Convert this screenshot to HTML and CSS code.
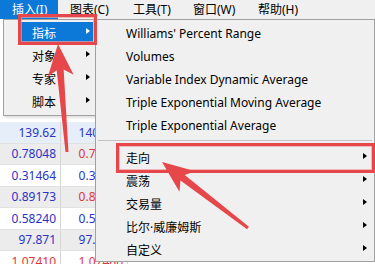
FILE: index.html
```html
<!DOCTYPE html>
<html>
<head>
<meta charset="utf-8">
<link rel="stylesheet" href="styles.css">
</head>
<body>
<div class="screen">
  <div class="menubar">
    <span class="mb active w1">插入(I)</span>
    <span class="mb w2">图表(C)</span>
    <span class="mb w3">工具(T)</span>
    <span class="mb w4">窗口(W)</span>
    <span class="mb">帮助(H)</span>
  </div>

  <div class="grid">
    <div class="row r-blue"><span class="c1 blue">139.62</span><span class="c2 blue">140.120</span></div>
    <div class="row r-gray"><span class="c1 blue">0.78048</span><span class="c2 red">0.78120</span></div>
    <div class="row"><span class="c1 blue">0.31464</span><span class="c2 blue">0.31480</span></div>
    <div class="row r-gray"><span class="c1 blue">0.89173</span><span class="c2 red">0.89190</span></div>
    <div class="row"><span class="c1 blue">0.58240</span><span class="c2 blue">0.58260</span></div>
    <div class="row r-gray"><span class="c1 blue">97.871</span><span class="c2 blue">97.8860</span></div>
    <div class="row"><span class="c1 red">1.07410</span><span class="c2 red">1.07480</span></div>
  </div>

  <div class="menu menu1">
    <div class="item m1 hl"><span>指标</span><i class="sub"></i></div>
    <div class="item m1"><span>对象</span><i class="sub"></i></div>
    <div class="item m1"><span>专家</span><i class="sub"></i></div>
    <div class="item m1"><span>脚本</span><i class="sub"></i></div>
  </div>

  <div class="menu menu2">
    <div class="item m2"><span>Williams' Percent Range</span></div>
    <div class="item m2"><span>Volumes</span></div>
    <div class="item m2"><span>Variable Index Dynamic Average</span></div>
    <div class="item m2"><span>Triple Exponential Moving Average</span></div>
    <div class="item m2"><span>Triple Exponential Average</span></div>
    <div class="sep"></div>
    <div class="item m2"><span>走向</span><i class="sub"></i></div>
    <div class="item m2"><span>震荡</span><i class="sub"></i></div>
    <div class="item m2"><span>交易量</span><i class="sub"></i></div>
    <div class="item m2"><span>比尔·威廉姆斯</span><i class="sub"></i></div>
    <div class="item m2"><span>自定义</span><i class="sub"></i></div>
  </div>

  <div class="mark mark1"></div>
  <div class="mark mark2"></div>

  <svg class="arrows" width="375" height="264" viewBox="0 0 375 264" xmlns="http://www.w3.org/2000/svg">
    <polygon fill="#e5474b" points="58,44 73.61,74.82 63.65,69.61 68.49,151.88 65.51,152.12 56.67,70.19 47.71,76.98"/>
    <polygon fill="#e5474b" points="162,162 195.30,171.18 184.75,175.05 248.91,226.81 247.09,229.19 180.49,180.61 179.46,191.80"/>
  </svg>
</div>
</body>
</html>
```
FILE: styles.css
```css
html, body {
  margin: 0;
  padding: 0;
}

.screen {
  width: 375px;
  height: 264px;
  position: relative;
  overflow: hidden;
  background: #ffffff;
  font-family: "Noto Sans", "Noto Sans CJK SC", sans-serif;
  font-size: 12px;
  color: #000;
}

.menubar {
  display: flex;
  height: 19px;
  line-height: 19px;
  background: #f0f0f0;
  white-space: nowrap;
}

.mb {
  padding-left: 12px;
  box-sizing: border-box;
}

.w1 { width: 58px; }
.w2 { width: 63px; }
.w3 { width: 60px; }
.w4 { width: 65px; }

.active {
  background: #0c78d8;
  color: #fff;
}

.grid {
  margin-top: 103px;
  display: flex;
  flex-direction: column;
}

.row {
  display: flex;
  height: 21.5px;
  box-sizing: border-box;
  border-bottom: 1px solid #e2e2e2;
  align-items: center;
  background: #ffffff;
}

.r-blue { background: #e6eefa; }
.r-gray { background: #ececec; }

.c1, .c2 {
  box-sizing: border-box;
  height: 100%;
  display: flex;
  align-items: center;
  justify-content: flex-end;
  padding-right: 4px;
  border-right: 1px solid #d6d6d6;
}

.c1 { width: 61px; }
.c2 { width: 67px; }

.blue { color: #2b33c8; }
.red { color: #e0353b; }

.menu {
  position: absolute;
  top: 19px;
  box-sizing: border-box;
  background: #f0f0f0;
  border: 1px solid #a0a0a0;
  display: flex;
  flex-direction: column;
}

.menu1 {
  left: 3px;
  width: 93px;
  height: 97px;
  padding-top: 1.5px;
  box-shadow: 2px 2px 2px rgba(0, 0, 0, 0.12);
}

.menu2 {
  left: 95px;
  width: 280px;
  height: 243px;
  padding-top: 2px;
}

.item {
  height: 23px;
  flex: none;
  display: flex;
  align-items: center;
  white-space: nowrap;
}

.m1 {
  margin: 0 2px 0 17px;
  padding-left: 11px;
}

.m2 {
  padding-left: 30px;
}

.hl {
  background: #0c78d8;
  color: #fff;
}

.sub {
  margin-left: auto;
  width: 0;
  height: 0;
  border-left: 4px solid #000;
  border-top: 3.5px solid transparent;
  border-bottom: 3.5px solid transparent;
  transform: translateY(-2px);
}

.m1 .sub { margin-right: 3px; }
.m2 .sub { margin-right: 7px; }
.hl .sub { border-left-color: #fff; }

.sep {
  flex: none;
  height: 1px;
  margin: 3px 2px 5px 2px;
  background: #c4c4c4;
}

.mark {
  position: absolute;
  box-sizing: border-box;
  border: 3px solid #e5474b;
  box-shadow: inset 0 0 0 1px rgba(240, 160, 162, 0.7);
}

.mark1 {
  left: 18px;
  top: 14px;
  width: 79px;
  height: 31px;
}

.mark2 {
  left: 116px;
  top: 143px;
  width: 259px;
  height: 30px;
}

.arrows {
  position: absolute;
  left: 0;
  top: 0;
}
```
